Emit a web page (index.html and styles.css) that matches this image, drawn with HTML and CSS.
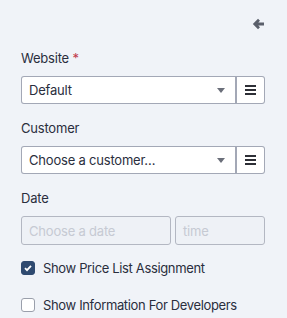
FILE: index.html
```html
<!DOCTYPE html>
<html>
<head>
<meta charset="utf-8">
<link rel="stylesheet" href="styles.css">
</head>
<body>
<div class="panel">
  <div class="top">
    <svg class="back" width="13" height="12" viewBox="0 0 13 12"><path d="M12 6H3.5M7 1.8L2.8 6 7 10.2" fill="none" stroke="#5a5f6b" stroke-width="2.8" stroke-linecap="butt"/></svg>
  </div>
  <div class="field">
    <label class="label first-label">Website <span class="req">*</span></label>
    <div class="combo">
      <div class="select"><span>Default</span><span class="caret"></span></div>
      <div class="btn"><span class="ham"></span></div>
    </div>
  </div>
  <div class="field">
    <label class="label">Customer</label>
    <div class="combo">
      <div class="select"><span>Choose a customer…</span><span class="caret"></span></div>
      <div class="btn"><span class="ham"></span></div>
    </div>
  </div>
  <div class="field">
    <label class="label">Date</label>
    <div class="dates">
      <div class="input date">Choose a date</div>
      <div class="input time">time</div>
    </div>
  </div>
  <div class="check first"><span class="box checked"><svg width="10" height="10" viewBox="0 0 10 10"><path d="M2 5.2l2 2 4-4.4" fill="none" stroke="#fff" stroke-width="1.8"/></svg></span>Show Price List Assignment</div>
  <div class="check second"><span class="box"></span>Show Information For Developers</div>
</div>
</body>
</html>
```
FILE: styles.css
```css
html, body { margin: 0; padding: 0; }
body {
  background: #f0f3f8;
  font-family: Inter, "Noto Sans", sans-serif;
  color: #2a2e3d;
  font-size: 13px;
  width: 287px;
  height: 318px;
  overflow: hidden;
}
.panel { padding: 0 22px 0 21px; }
.top { display: flex; justify-content: flex-end; padding-top: 18px; height: 12px; }
.back { display: block; }
.label { display: block; font-size: 13px; line-height: 16px; letter-spacing: -0.2px; margin-top: 16px; }
.label.first-label { margin-top: 20px; }
.req { color: #c0394b; }
.combo { display: flex; height: 28px; margin-top: 10px; }
.select {
  flex: 1; display: flex; align-items: center; justify-content: space-between;
  background: #fff; border: 1px solid #a3a8b6; border-right: 2px solid #a3a8b6;
  border-radius: 3px 0 0 3px; padding: 0 10px 0 7px; box-sizing: border-box;
  letter-spacing: -0.2px;
}
.caret { width: 0; height: 0; border-left: 4px solid transparent; border-right: 4px solid transparent; border-top: 5px solid #6b6f7a; }
.btn {
  width: 28px; box-sizing: border-box; background: #fff; border: 1px solid #a3a8b6; border-left: none;
  border-radius: 0 3px 3px 0; display: flex; align-items: center; justify-content: center;
}
.ham { width: 11px; height: 2px; background: #2d2f36; box-shadow: 0 -4px 0 #2d2f36, 0 4px 0 #2d2f36; }
.dates { display: flex; gap: 4px; margin-top: 10px; height: 29px; }
.input {
  box-sizing: border-box; border: 1px solid #b3b7c2; border-radius: 3px; background: #eef1f6;
  color: #c6cad3; display: flex; align-items: center; padding-left: 7px; letter-spacing: -0.2px;
}
.date { width: 150px; }
.time { flex: 1; }
.check { display: flex; align-items: center; font-size: 13px; letter-spacing: -0.35px; height: 16px; }
.check.first { margin-top: 15px; }
.check.second { margin-top: 21px; }
.box {
  width: 14px; height: 14px; box-sizing: border-box; border: 1px solid #9a9fab; border-radius: 3px;
  background: #fff; margin-right: 8px; display: flex; align-items: center; justify-content: center;
}
.box.checked { background: #2f4a70; border-color: #2f4a70; }
```
